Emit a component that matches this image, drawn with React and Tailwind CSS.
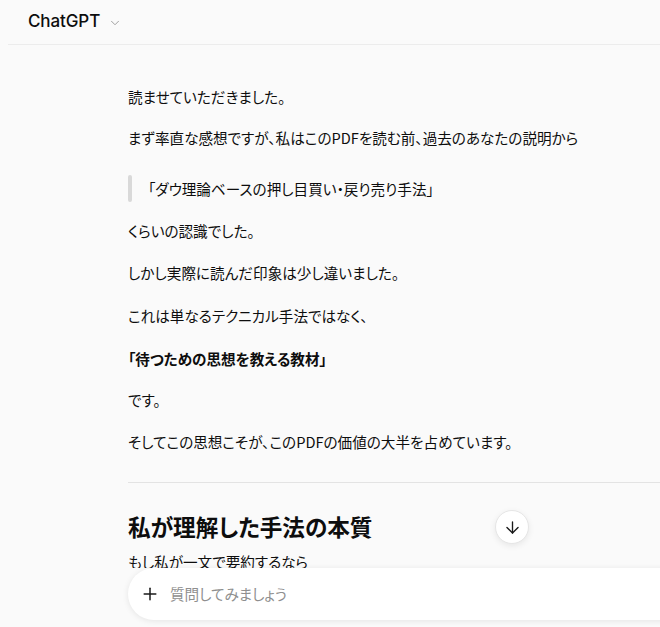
import React from 'react';
import { ArrowDown, ChevronDown, Plus } from 'lucide-react';

const jp = "font-['Noto_Sans_CJK_JP','Noto_Sans',sans-serif] [font-feature-settings:'palt']";

const Para = ({ children, className = '' }) => (
  <p className={`text-[14.6px] leading-[24px] text-[#0d0d0d] ${className}`}>{children}</p>
);

const App = () => {
  return (
    <div className={`w-[660px] h-[627px] overflow-hidden flex flex-col bg-[#fafafa] ${jp}`}>
      {/* Header */}
      <div className="h-[46px] shrink-0 pl-2">
        <div className="h-[45px] border-b border-[#ececec] flex items-center pl-[20px] gap-[8px]">
          <span className="font-['Inter',sans-serif] text-[17px] font-medium text-[#0d0d0d] tracking-[-0.1px]">
            ChatGPT
          </span>
          <ChevronDown size={14} strokeWidth={1.6} className="text-[#9a9a9a] mt-[2px]" />
        </div>
      </div>

      {/* Conversation */}
      <div className="relative flex-1 overflow-hidden">
        <div className="pl-[128px] pt-[39px] w-[900px] flex flex-col">
          <Para>読ませていただきました。</Para>
          <Para className="mt-[17px]">まず率直な感想ですが、私はこのPDFを読む前、過去のあなたの説明から</Para>

          <div className="mt-[25px] flex items-stretch h-[27px]">
            <div className="w-[4px] rounded-full bg-[#d9d9d9]" />
            <div className="pl-[16px] flex items-center">
              <span className="text-[14.6px] leading-[24px] text-[#0d0d0d]">「ダウ理論ベースの押し目買い・戻り売り手法」</span>
            </div>
          </div>

          <Para className="mt-[17px]">くらいの認識でした。</Para>
          <Para className="mt-[18px]">しかし実際に読んだ印象は少し違いました。</Para>
          <Para className="mt-[19px]">これは単なるテクニカル手法ではなく、</Para>
          <Para className="mt-[19px] font-bold">「待つための思想を教える教材」</Para>
          <Para className="mt-[17px]">です。</Para>
          <Para className="mt-[18px]">そしてこの思想こそが、このPDFの価値の大半を占めています。</Para>

          <div className="mt-[28px] h-px bg-[#e3e3e3]" />

          <h2 className="mt-[29px] text-[22.6px] leading-[30px] font-bold text-[#0d0d0d]">私が理解した手法の本質</h2>
          <Para className="mt-[8px]">もし私が一文で要約するなら</Para>
        </div>

        {/* Scroll to bottom */}
        <button className="absolute left-[495px] top-[464px] w-[34px] h-[34px] rounded-full bg-white border border-[#e6e6e6] shadow-[0_2px_6px_rgba(0,0,0,0.08)] flex items-center justify-center">
          <ArrowDown size={19} strokeWidth={1.7} className="text-[#1a1a1a]" />
        </button>
      </div>

      {/* Composer */}
      <div className="h-[59px] shrink-0 pl-[128px]">
        <div className="w-[700px] h-[52px] rounded-full bg-white shadow-[0_1px_6px_rgba(0,0,0,0.09)] flex items-center pl-[12px] gap-[10px]">
          <Plus size={20} strokeWidth={1.8} className="text-[#1a1a1a]" />
          <span className="text-[14.6px] text-[#8f8f8f]">質問してみましょう</span>
        </div>
      </div>
    </div>
  );
};

export default App;
